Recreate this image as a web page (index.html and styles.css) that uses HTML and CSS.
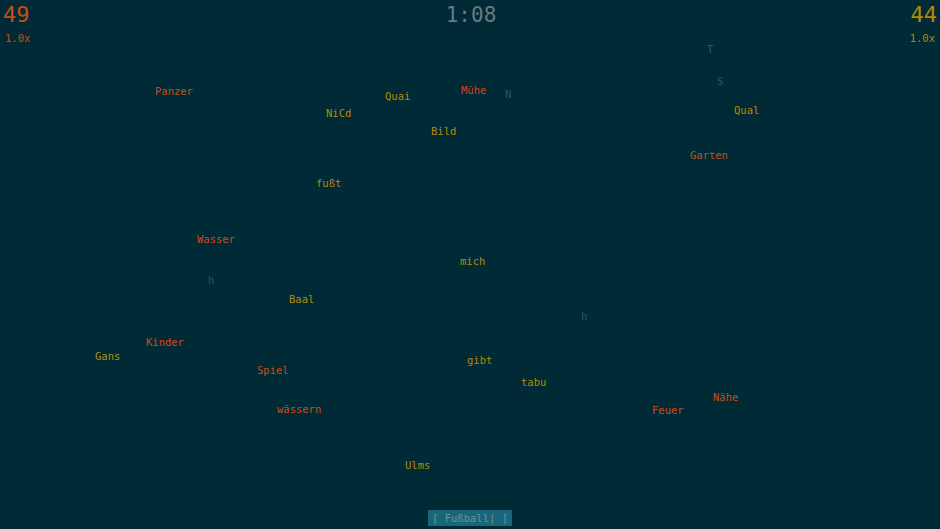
FILE: index.html
```html
<!DOCTYPE html>
<html lang="de">
<head>
<meta charset="utf-8">
<title>Tipp-Duell</title>
<link rel="stylesheet" href="styles.css">
</head>
<body>
<div class="game">
  <header class="hud">
    <div class="player player-left">
      <div class="score">49</div>
      <div class="mult">1.0x</div>
    </div>
    <div class="timer">1:08</div>
    <div class="player player-right">
      <div class="score">44</div>
      <div class="mult">1.0x</div>
    </div>
  </header>

  <div class="field">
    <span class="ghost" style="left:707px;top:43px">T</span>
    <span class="ghost" style="left:717px;top:75px">S</span>
    <span class="ghost" style="left:505px;top:88px">N</span>
    <span class="ghost" style="left:208px;top:274px">h</span>
    <span class="ghost" style="left:581px;top:310px">h</span>

    <span class="word orange" style="left:155px;top:85px">Panzer</span>
    <span class="word yellow" style="left:385px;top:90px">Quai</span>
    <span class="word red" style="left:461px;top:84px">Mühe</span>
    <span class="word yellow" style="left:326px;top:107px">NiCd</span>
    <span class="word yellow" style="left:431px;top:125px">Bild</span>
    <span class="word yellow" style="left:734px;top:104px">Qual</span>
    <span class="word orange" style="left:690px;top:149px">Garten</span>
    <span class="word yellow" style="left:316px;top:177px">fußt</span>
    <span class="word orange" style="left:197px;top:233px">Wasser</span>
    <span class="word yellow" style="left:460px;top:255px">mich</span>
    <span class="word yellow" style="left:289px;top:293px">Baal</span>
    <span class="word orange" style="left:146px;top:336px">Kinder</span>
    <span class="word green" style="left:95px;top:350px">Gans</span>
    <span class="word orange" style="left:257px;top:364px">Spiel</span>
    <span class="word yellow" style="left:467px;top:354px">gibt</span>
    <span class="word yellow" style="left:521px;top:376px">tabu</span>
    <span class="word orange" style="left:713px;top:391px">Nähe</span>
    <span class="word orange" style="left:652px;top:404px">Feuer</span>
    <span class="word orange" style="left:277px;top:403px">wässern</span>
    <span class="word yellow" style="left:405px;top:459px">Ulms</span>
  </div>

  <footer class="input-row">
    <div class="input-box">[ Fußball| ]</div>
  </footer>
</div>
</body>
</html>
```

FILE: styles.css
```css
* {
  box-sizing: border-box;
}

html, body {
  margin: 0;
  padding: 0;
  background: #002b36;
}

body {
  font-family: "DejaVu Sans Mono", "Liberation Mono", monospace;
  color: #839496;
}

.game {
  position: relative;
  width: 940px;
  height: 529px;
  display: flex;
  flex-direction: column;
  overflow: hidden;
}

.hud {
  display: flex;
  justify-content: space-between;
  align-items: flex-start;
  padding: 2px 3px 0 3px;
}

.player {
  display: flex;
  flex-direction: column;
}

.player-right {
  align-items: flex-end;
}

.score {
  font-size: 22px;
  line-height: 26px;
}

.player-left .score,
.player-left .mult {
  color: #cb4b16;
}

.player-right .score,
.player-right .mult {
  color: #b58900;
}

.mult {
  font-size: 10.5px;
  line-height: 14px;
  padding: 3px 2px 0 2px;
}

.timer {
  font-size: 21px;
  line-height: 26px;
  color: #657b83;
  margin-left: 2px;
}

.field {
  flex: 1;
}

.word,
.ghost {
  position: absolute;
  font-size: 10.5px;
  line-height: 12px;
  white-space: nowrap;
}

.orange {
  color: #cb4b16;
}

.red {
  color: #d2401f;
}

.yellow {
  color: #b58900;
}

.green {
  color: #a89410;
}

.ghost {
  color: #2a5562;
}

.input-row {
  display: flex;
  justify-content: center;
  padding: 0 0 3px 0;
}

.input-box {
  font-size: 10.5px;
  line-height: 16px;
  height: 16px;
  padding: 0 4px;
  background: #17677a;
  color: #6f8f97;
  white-space: pre;
}
```
